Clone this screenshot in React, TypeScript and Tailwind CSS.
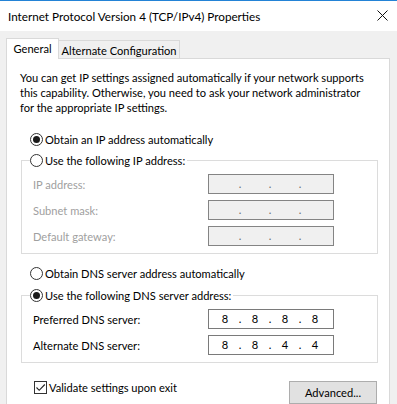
import { Fragment } from 'react'

const FONT = "font-['Lato','Liberation_Sans',sans-serif]"

function Radio({ checked }: { checked?: boolean }) {
  return (
    <span className="flex h-[13px] w-[13px] shrink-0 items-center justify-center rounded-full border border-[#333333] bg-white">
      {checked && <span className="h-[7px] w-[7px] rounded-full bg-[#1a1a1a]" />}
    </span>
  )
}

function IpBox({ value, disabled }: { value?: string[]; disabled?: boolean }) {
  const parts = value ?? ['', '', '', '']
  return (
    <div
      className={`flex h-[20px] w-[126px] items-center border pl-[3px] leading-[18px] ${
        disabled ? 'border-[#848484] bg-[#f0f0f0] text-[#6d6d6d]' : 'border-[#7a7a7a] bg-white text-black'
      }`}
    >
      {parts.map((p, i) => (
        <Fragment key={i}>
          <span className="w-[26px] text-center">{p}</span>
          {i < 3 && <span className="w-[4px] text-center">.</span>}
        </Fragment>
      ))}
    </div>
  )
}

function Field({ label, value, disabled }: { label: string; value?: string[]; disabled?: boolean }) {
  return (
    <div className="flex h-[20px] items-center">
      <span className={`w-[175px] leading-[15px] ${disabled ? 'text-[#a0a0a0]' : 'text-black'}`}>{label}</span>
      <IpBox value={value} disabled={disabled} />
    </div>
  )
}

function RadioRow({ label, checked }: { label: string; checked?: boolean }) {
  return (
    <div className="flex h-[16px] items-center gap-[2px]">
      <Radio checked={checked} />
      <span className="whitespace-nowrap leading-[15px]">{label}</span>
    </div>
  )
}

export default function App() {
  return (
    <div className={`h-[404px] w-[397px] overflow-hidden bg-[#f0f0f0] text-[11.1px] text-black ${FONT}`}>
      {/* Title bar */}
      <div className="flex h-[31px] items-center justify-between border-t border-[#2383d6] bg-white pl-[8px] pr-[9px]">
        <span className="text-[11.7px] leading-[15px]">Internet Protocol Version 4 (TCP/IPv4) Properties</span>
        <svg width="11" height="11" viewBox="0 0 11 11" className="mb-px">
          <path d="M0.5 0.5 L10.5 10.5 M10.5 0.5 L0.5 10.5" stroke="#111" strokeWidth="1" fill="none" />
        </svg>
      </div>

      {/* Tabs */}
      <div className="relative z-10 -mb-px mt-[7px] flex h-[21px] items-start pl-[6px]">
        <div className="flex h-[21px] w-[53px] items-start justify-center whitespace-nowrap border-l border-r border-t border-[#d9d9d9] bg-white pt-[2px] leading-[15px]">
          General
        </div>
        <div className="mt-[2px] flex h-[18px] w-[121px] items-center justify-center whitespace-nowrap border-r border-t border-[#d9d9d9] bg-[#f0f0f0] pt-px leading-[15px]">
          Alternate Configuration
        </div>
      </div>

      {/* Panel */}
      <div className="ml-[6px] h-[360px] w-[384px] border border-[#d9d9d9] bg-white pl-[13px] pr-[11px] pt-[11px]">
        <p className="whitespace-nowrap leading-[15px]">
          You can get IP settings assigned automatically if your network supports
          <br />
          this capability. Otherwise, you need to ask your network administrator
          <br />
          for the appropriate IP settings.
        </p>

        <div className="mt-[16px] pl-[10px]">
          <RadioRow label="Obtain an IP address automatically" checked />
        </div>

        <div className="ml-[1px] mt-[13px] w-[357px] border border-[#dcdcdc] pb-[7px] pl-[11px]">
          <div className="-ml-[3px] -mt-[9px] flex w-fit bg-white pr-[2px]">
            <RadioRow label="Use the following IP address:" />
          </div>
          <div className="mt-[6px] flex flex-col gap-[6px]">
            <Field label="IP address:" disabled />
            <Field label="Subnet mask:" disabled />
            <Field label="Default gateway:" disabled />
          </div>
        </div>

        <div className="mt-[11px] pl-[10px]">
          <RadioRow label="Obtain DNS server address automatically" />
        </div>

        <div className="ml-[1px] mt-[14px] w-[357px] border border-[#dcdcdc] pb-[7px] pl-[11px]">
          <div className="-ml-[3px] -mt-[9px] flex w-fit bg-white pr-[2px]">
            <RadioRow label="Use the following DNS server address:" checked />
          </div>
          <div className="mt-[6px] flex flex-col gap-[6px]">
            <Field label="Preferred DNS server:" value={['8', '8', '8', '8']} />
            <Field label="Alternate DNS server:" value={['8', '8', '4', '4']} />
          </div>
        </div>

        <div className="mt-[17px] flex items-start justify-between pr-px">
          <label className="ml-[14px] flex h-[15px] items-center gap-[2px]">
            <span className="flex h-[13px] w-[13px] items-center justify-center border border-[#333333] bg-white">
              <svg width="11" height="11" viewBox="0 0 11 11">
                <path d="M1.5 5.5 L4.2 8.3 L9.8 2.5" stroke="#222" strokeWidth="1.1" fill="none" />
              </svg>
            </span>
            <span className="whitespace-nowrap leading-[15px]">Validate settings upon exit</span>
          </label>
          <button className="mt-px flex h-[23px] w-[88px] items-center justify-center border border-[#adadad] bg-[#e1e1e1] leading-[15px]">
            Advanced...
          </button>
        </div>
      </div>
    </div>
  )
}
